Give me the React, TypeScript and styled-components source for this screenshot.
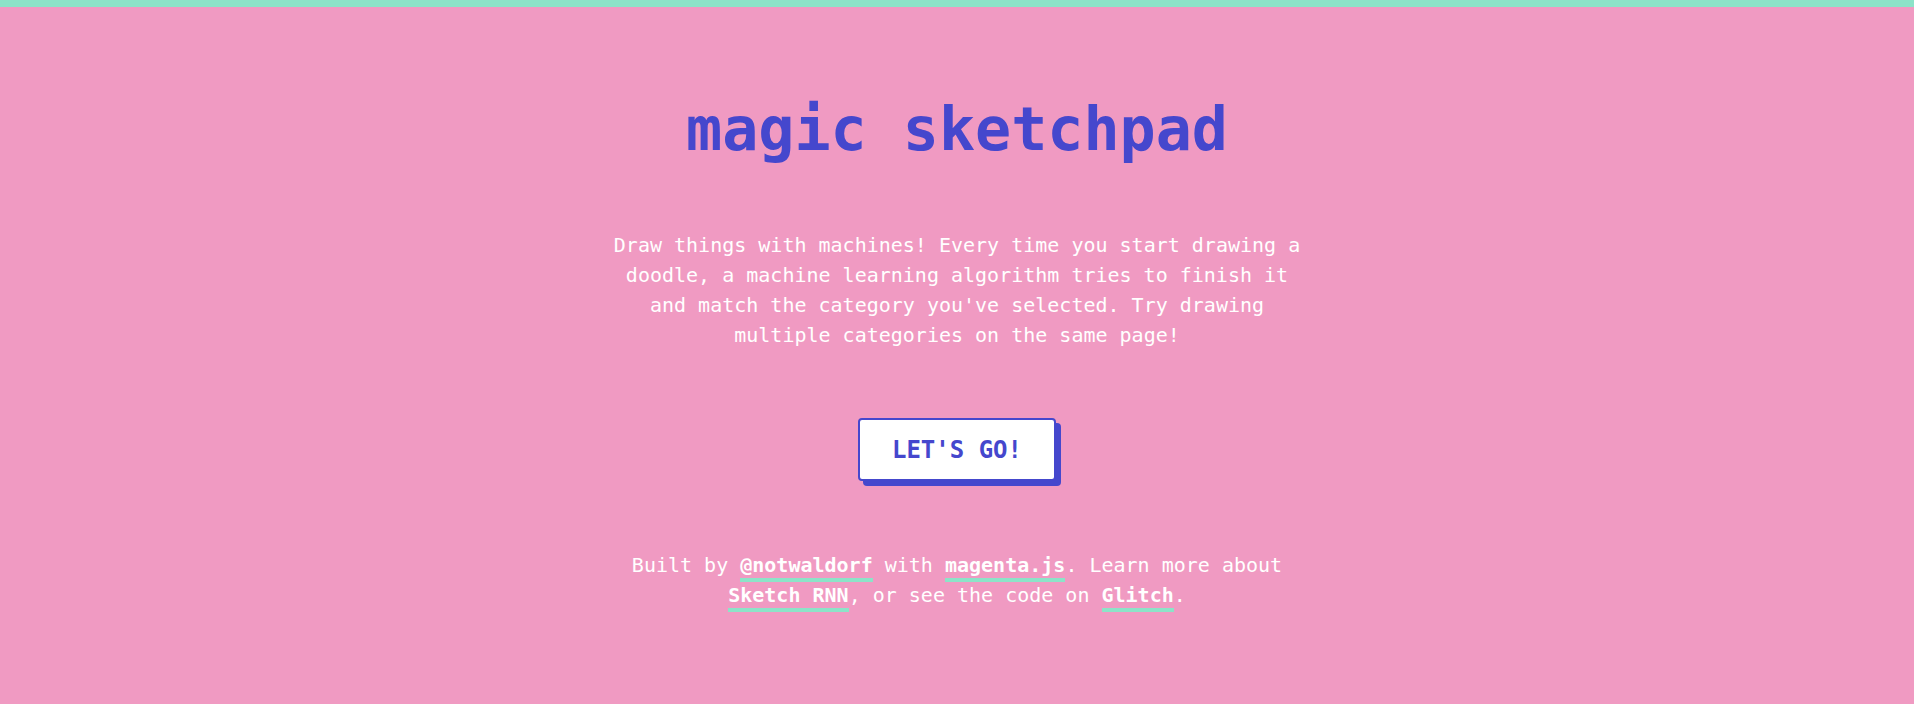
import React from "react";
import styled, { createGlobalStyle } from "styled-components";

const pink = "#f09ac2";
const teal = "#8ce3c8";
const blue = "#4547cd";
const mono = `"DejaVu Sans Mono", "Liberation Mono", monospace`;

const GlobalStyle = createGlobalStyle`
  html, body {
    margin: 0;
    padding: 0;
    background: ${pink};
  }
  body {
    font-family: ${mono};
    min-height: 704px;
  }
`;

const Page = styled.div`
  min-height: 704px;
  background: ${pink};
  border-top: 7px solid ${teal};
  box-sizing: border-box;
  display: flex;
  flex-direction: column;
  align-items: center;
`;

const Title = styled.h1`
  margin: 92px 0 0;
  font-family: ${mono};
  font-size: 60px;
  line-height: 60px;
  font-weight: 700;
  color: ${blue};
  text-align: center;
`;

const Intro = styled.p`
  margin: 71px 0 0;
  max-width: 700px;
  font-family: ${mono};
  font-size: 20px;
  line-height: 30px;
  color: #ffffff;
  text-align: center;
`;

const GoButton = styled.button`
  margin-top: 68px;
  height: 63px;
  padding: 0 32px;
  box-sizing: border-box;
  display: flex;
  align-items: center;
  justify-content: center;
  background: #ffffff;
  border: 2px solid ${blue};
  border-radius: 4px;
  box-shadow: 5px 5px 0 ${blue};
  color: ${blue};
  font-family: ${mono};
  font-size: 24px;
  font-weight: 700;
  cursor: pointer;
`;

const Footer = styled.p`
  margin: 69px 0 0;
  max-width: 700px;
  font-family: ${mono};
  font-size: 20px;
  line-height: 30px;
  color: #ffffff;
  text-align: center;
`;

const Link = styled.a`
  color: #ffffff;
  font-weight: 700;
  text-decoration: none;
  padding-bottom: 1px;
  border-bottom: 4px solid ${teal};
  white-space: nowrap;
`;

export default function App() {
  return (
    <>
      <GlobalStyle />
      <Page>
        <Title>magic sketchpad</Title>
        <Intro>
          Draw things with machines! Every time you start drawing a doodle, a
          machine learning algorithm tries to finish it and match the category
          you've selected. Try drawing multiple categories on the same page!
        </Intro>
        <GoButton>LET'S GO!</GoButton>
        <Footer>
          Built by <Link href="#">@notwaldorf</Link> with{" "}
          <Link href="#">magenta.js</Link>. Learn more about{" "}
          <Link href="#">Sketch RNN</Link>, or see the code on{" "}
          <Link href="#">Glitch</Link>.
        </Footer>
      </Page>
    </>
  );
}
